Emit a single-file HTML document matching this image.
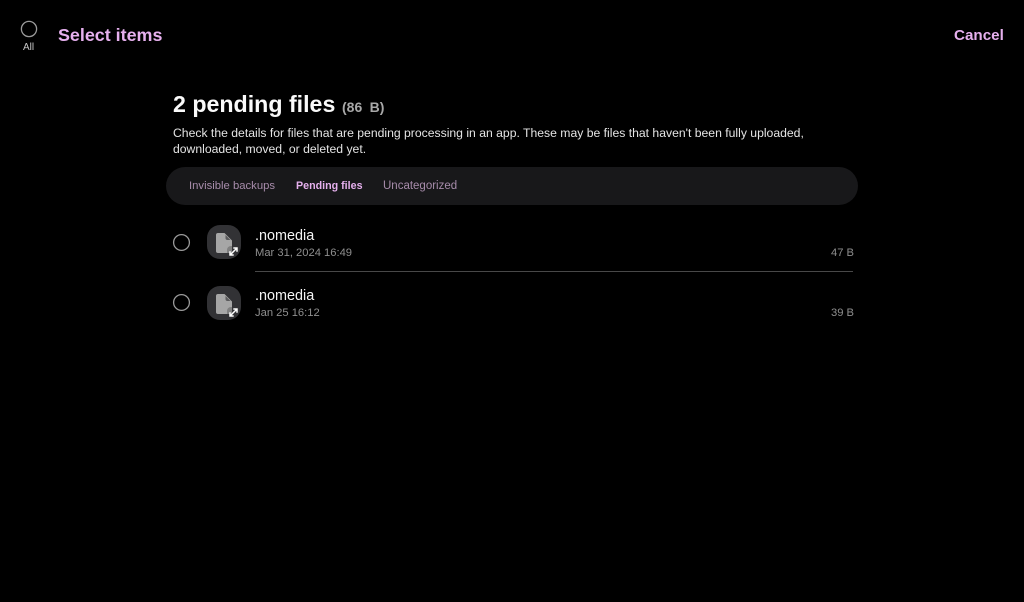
<!DOCTYPE html>
<html lang="en">
<head>
<meta charset="utf-8">
<title>Select items</title>
<style>
html,body{margin:0;padding:0;background:#000;}
body{width:1024px;height:602px;overflow:hidden;position:relative;font-family:"Liberation Sans",sans-serif;}
.t{position:absolute;white-space:nowrap;line-height:1;}
.c{position:absolute;}
.ico{position:absolute;left:207px;width:34px;height:34px;}
</style>
</head>
<body>
<svg class="c" style="left:20px;top:20px;" width="18" height="18" viewBox="0 0 18 18"><circle cx="9" cy="9" r="7.600" fill="none" stroke="#9a9a9a" stroke-width="1.300"/></svg>
<div class="t" style="left:23px;top:43px;font-size:10px;color:#c8c8c8;">All</div>
<div class="t" style="left:58px;top:27px;font-size:17.900px;font-weight:bold;color:#e6b0ee;">Select items</div>
<div class="t" style="left:954px;top:28px;font-size:15.200px;font-weight:bold;color:#e6b0ee;">Cancel</div>

<div class="t" style="left:173px;top:93px;font-size:23.200px;font-weight:bold;color:#fafafa;">2 pending files</div>
<div class="t" style="left:342px;top:100px;font-size:14px;font-weight:bold;color:#a8a8a8;word-spacing:3.500px;">(86 B)</div>
<div class="t" style="left:173px;top:127px;font-size:12.200px;color:#e4e4e4;">Check the details for files that are pending processing in an app. These may be files that haven't been fully uploaded,</div>
<div class="t" style="left:173px;top:143px;font-size:12.200px;color:#e4e4e4;">downloaded, moved, or deleted yet.</div>

<div style="position:absolute;left:166px;top:167px;width:692px;height:38px;border-radius:19px;background:#18181a;"></div>
<div class="t" style="left:189px;top:181px;font-size:11.300px;color:#a78cab;">Invisible backups</div>
<div class="t" style="left:296px;top:181px;font-size:10.700px;font-weight:bold;color:#e6b0ee;">Pending files</div>
<div class="t" style="left:383px;top:181px;font-size:11.500px;color:#a78cab;">Uncategorized</div>

<svg class="c" style="left:172px;top:233px;" width="19" height="19" viewBox="0 0 19 19"><circle cx="9.500" cy="9.500" r="7.900" fill="none" stroke="#9a9a9a" stroke-width="1.300"/></svg>
<svg class="ico" style="top:225px" viewBox="0 0 34 34">
<rect width="34" height="34" rx="13" fill="#323235"/>
<path d="M11 8h6.500L25 15.500V26a2 2 0 0 1-2 2H11a2 2 0 0 1-2-2V10a2 2 0 0 1 2-2z" fill="#a6a6a6"/>
<path d="M18.500 10v3a2 2 0 0 0 2 2h3z" fill="#5a5a5c"/>
<path d="M20 28h3a2 2 0 0 0 2-2v-5h-1a4 4 0 0 0-4 4z" fill="#808080"/>
<path d="M23.500 29.500l6-6M26.300 23h3.700v3.700M23 26.300V30h3.700" fill="none" stroke="#fff" stroke-width="1.500"/>
</svg>
<div class="t" style="left:255px;top:229px;font-size:14.400px;color:#f4f4f4;">.nomedia</div>
<div class="t" style="left:255px;top:248px;font-size:11.200px;color:#8f8f8f;">Mar 31, 2024 16:49</div>
<div class="t" style="right:170px;top:248px;font-size:11.200px;color:#8f8f8f;">47 B</div>
<div style="position:absolute;left:255px;top:271px;width:598px;height:1px;background:#484848;"></div>

<svg class="c" style="left:172px;top:293px;" width="19" height="19" viewBox="0 0 19 19"><circle cx="9.500" cy="9.500" r="7.900" fill="none" stroke="#9a9a9a" stroke-width="1.300"/></svg>
<svg class="ico" style="top:286px" viewBox="0 0 34 34">
<rect width="34" height="34" rx="13" fill="#323235"/>
<path d="M11 8h6.500L25 15.500V26a2 2 0 0 1-2 2H11a2 2 0 0 1-2-2V10a2 2 0 0 1 2-2z" fill="#a6a6a6"/>
<path d="M18.500 10v3a2 2 0 0 0 2 2h3z" fill="#5a5a5c"/>
<path d="M20 28h3a2 2 0 0 0 2-2v-5h-1a4 4 0 0 0-4 4z" fill="#808080"/>
<path d="M23.500 29.500l6-6M26.300 23h3.700v3.700M23 26.300V30h3.700" fill="none" stroke="#fff" stroke-width="1.500"/>
</svg>
<div class="t" style="left:255px;top:289px;font-size:14.400px;color:#f4f4f4;">.nomedia</div>
<div class="t" style="left:255px;top:308px;font-size:11.200px;color:#8f8f8f;">Jan 25 16:12</div>
<div class="t" style="right:170px;top:308px;font-size:11.200px;color:#8f8f8f;">39 B</div>
</body>
</html>
